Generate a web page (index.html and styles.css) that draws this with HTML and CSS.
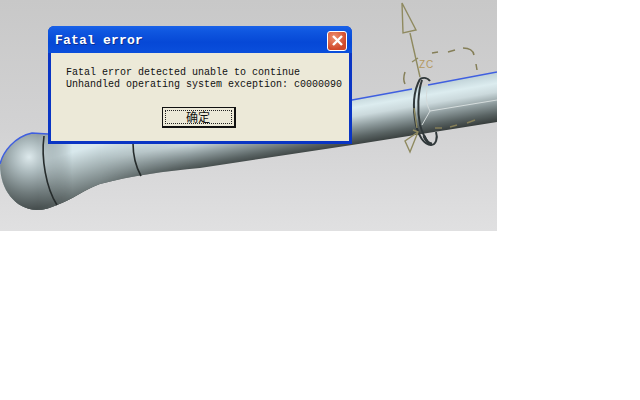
FILE: index.html
```html
<!DOCTYPE html>
<html lang="zh">
<head>
<meta charset="utf-8">
<title>Fatal error</title>
<link rel="stylesheet" href="styles.css">
</head>
<body>
<main class="desktop">
<svg class="viewport" width="497" height="231" viewBox="0 0 497 231" xmlns="http://www.w3.org/2000/svg">
<defs>
<linearGradient id="bg" x1="0" y1="0" x2="0" y2="1"><stop offset="0" stop-color="#c8c8c8"/><stop offset="0.55" stop-color="#d2d2d3"/><stop offset="1" stop-color="#e0e0e1"/></linearGradient>
<linearGradient id="pipe" gradientUnits="userSpaceOnUse" x1="424" y1="86" x2="432" y2="133"><stop offset="0" stop-color="#c2d4d9"/><stop offset="0.2" stop-color="#dcecef"/><stop offset="0.38" stop-color="#cbd9dc"/><stop offset="0.6" stop-color="#8f9c9e"/><stop offset="0.82" stop-color="#596363"/><stop offset="1" stop-color="#363c3b"/></linearGradient>
<linearGradient id="flare" gradientUnits="userSpaceOnUse" x1="80" y1="150" x2="96" y2="205"><stop offset="0" stop-color="#d8e8ec"/><stop offset="0.35" stop-color="#a4b2b4"/><stop offset="0.8" stop-color="#5f6969"/><stop offset="1" stop-color="#474f4f"/></linearGradient>
<linearGradient id="flareMaskFill" gradientUnits="userSpaceOnUse" x1="100" y1="0" x2="190" y2="0"><stop offset="0" stop-color="#fff"/><stop offset="1" stop-color="#000"/></linearGradient>
<linearGradient id="ballMaskFill" gradientUnits="userSpaceOnUse" x1="38" y1="0" x2="72" y2="0"><stop offset="0" stop-color="#fff"/><stop offset="1" stop-color="#000"/></linearGradient>
<radialGradient id="ball" gradientUnits="userSpaceOnUse" cx="29" cy="157" r="52"><stop offset="0" stop-color="#dde9ec"/><stop offset="0.3" stop-color="#acbabd"/><stop offset="0.7" stop-color="#6f7a7b"/><stop offset="1" stop-color="#474f4f"/></radialGradient>
<mask id="flareMask" maskUnits="userSpaceOnUse" x="0" y="0" width="497" height="231"><rect width="497" height="231" fill="url(#flareMaskFill)"/></mask>
<mask id="ballMask" maskUnits="userSpaceOnUse" x="0" y="0" width="497" height="231"><rect width="497" height="231" fill="url(#ballMaskFill)"/></mask>
</defs>
<rect width="497" height="231" fill="url(#bg)"/>
<path d="M0 165 C3 152 14 137 32 133 L48 134 L352 100 L497 72 V122 L352 145 L200 168 C165 171 130 176 100 184 C85 189 72 200 57 205 C50 208 44 210 36 210 C16 209 0 190 0 165Z" fill="url(#pipe)"/>
<path mask="url(#flareMask)" d="M0 165 C3 152 14 137 32 133 L48 134 L352 100 L497 72 V122 L352 145 L200 168 C165 171 130 176 100 184 C85 189 72 200 57 205 C50 208 44 210 36 210 C16 209 0 190 0 165Z" fill="url(#flare)"/>
<path mask="url(#ballMask)" d="M0 165 C3 152 14 137 32 133 L48 134 L352 100 L497 72 V122 L352 145 L200 168 C165 171 130 176 100 184 C85 189 72 200 57 205 C50 208 44 210 36 210 C16 209 0 190 0 165Z" fill="url(#ball)"/>
<path class="edge" d="M0 164 C3 152 14 137 32 133 L48 134"/>
<path class="edge" d="M352 100 L412 89 M428 85 L497 72"/>
<path class="seam" d="M44 136 C41 158 46 188 57 205"/>
<path class="seam" d="M133 143 C133 156 136 167 141 176"/>
<path class="rim" d="M430 111 L497 100 M430 111 L422 125 M427 88 C426 98 426 104 430 111"/>
<path class="ring" d="M420 79 C414 90 412 105 416 125 C418 135 424 145 431 145 C436 145 438 138 436 132"/>
<path class="ring" d="M422 80 C418 92 417 110 420 125 C422 132 425 138 428 142"/>
<path class="ring" d="M420 79 C424 77 428 78 430 81"/>
<path class="band" d="M424 136 C426 141 429 144 432 144"/>
<path class="axis" d="M402 3 L416 30 L403 33Z M410 33 L420 77 M413 130 L418 132 L410 152 L405 141 L418 132 M414 108 L417 128 M412 62 L418 58"/>
<path class="dash" d="M432 53 L438 52 M448 52 L455 50 M463 48 C470 48 473 50 474 55 M476 64 L477 70 M405 72 C403 78 404 82 405 84 M435 128 L442 128 M450 127 L457 125 M467 123 L475 120"/>
<text class="zc" x="419" y="68">ZC</text>
</svg>
<section class="dialog">
<header class="titlebar">
<h1 class="title">Fatal error</h1>
<div class="close"><svg width="13" height="13" viewBox="0 0 13 13" xmlns="http://www.w3.org/2000/svg"><path d="M2 2 L11 11 M11 2 L2 11" stroke="#fff" stroke-width="2.4"/></svg></div>
</header>
<div class="body">
<p class="message">Fatal error detected unable to continue<br>Unhandled operating system exception: c0000090</p>
<button class="ok"><span class="focus">确定</span></button>
</div>
</section>
</main>
</body>
</html>
```
FILE: styles.css
```css
html, body { margin: 0; background: #fff; }
.desktop { position: relative; width: 640px; height: 400px; overflow: hidden; }
.viewport { display: block; }
.edge { fill: none; stroke: #3f5fe0; stroke-width: 1.4; }
.seam { fill: none; stroke: #262c2c; stroke-width: 1.6; }
.ring { fill: none; stroke: #30383a; stroke-width: 2; }
.band { fill: none; stroke: #30383a; stroke-width: 3; }
.rim { fill: none; stroke: #d5dcdc; stroke-width: 1; }
.axis { fill: none; stroke: #8f8a60; stroke-width: 1.4; }
.dash { fill: none; stroke: #857f58; stroke-width: 1.5; }
.zc { font: 10px "Liberation Sans", sans-serif; fill: #b4995f; letter-spacing: 1px; }
.dialog {
  position: absolute; left: 48px; top: 26px; width: 304px; height: 118px;
  box-sizing: border-box; display: flex; flex-direction: column;
  background: #0a35c4; border-radius: 6px 6px 0 0;
  padding: 0 3px 3px;
}
.titlebar {
  height: 27px; flex: none; margin: 0 -3px;
  padding: 2px 5px 0 7px; box-sizing: border-box;
  display: flex; align-items: center; justify-content: space-between;
  border-radius: 6px 6px 0 0;
  background: linear-gradient(#1a62e8 0, #0f57e0 20%, #0648d6 60%, #0a4fdc 100%);
}
.title {
  margin: 0; font: bold 13px "Liberation Mono", monospace; letter-spacing: 0.2px;
  color: #fff; text-shadow: 1px 1px #0a2f90;
}
.close {
  width: 20px; height: 20px; box-sizing: border-box; display: flex;
  align-items: center; justify-content: center;
  background: radial-gradient(circle at 35% 30%, #ee9070, #d0482a 70%);
  border: 1px solid #fff; border-radius: 3px;
}
.body {
  flex: 1; background: #ece9d8; display: flex; flex-direction: column; align-items: center;
}
.message {
  margin: 0; padding: 14px 0 0 15px; align-self: stretch;
  font: 10px/12px "Liberation Mono", monospace; color: #111;
}
.ok {
  margin: 16px 0 0 -3px; padding: 2px; width: 74px; height: 21px; box-sizing: border-box;
  background: #ece9d8; border: 1px solid #111; border-right-width: 2px; border-bottom-width: 2px;
  display: flex;
}
.focus {
  flex: 1; border: 1px dotted #222; display: flex; align-items: center; justify-content: center;
  font: 12px/12px "Noto Sans CJK SC", sans-serif; color: #111;
}
```
